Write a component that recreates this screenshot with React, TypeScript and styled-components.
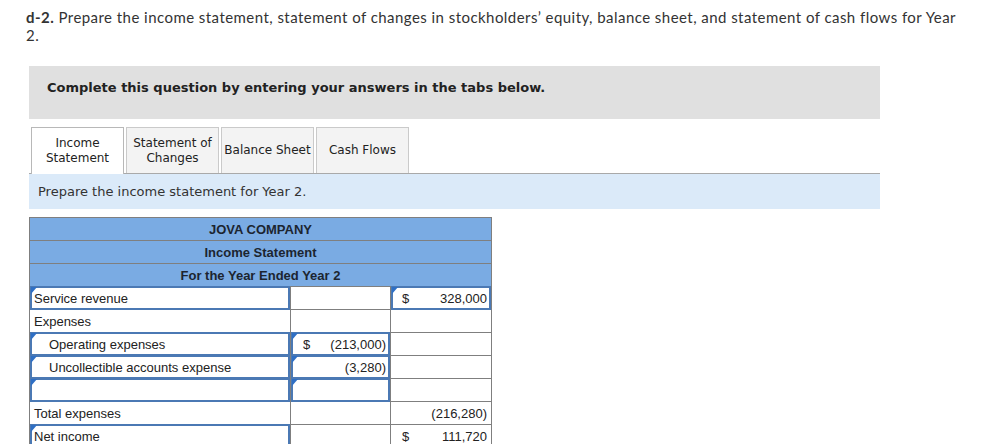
import styled, { createGlobalStyle } from "styled-components";

const GlobalStyle = createGlobalStyle`
  html, body {
    margin: 0;
    padding: 0;
    background: #ffffff;
  }
`;

const Page = styled.div`
  padding: 8px 0 0 26px;
  font-family: "Lato", "Liberation Sans", sans-serif;
  color: #333;
`;

const Heading = styled.p`
  margin: 0;
  width: 940px;
  font-size: 15px;
  letter-spacing: 0.45px;
  line-height: 18px;
  color: #333;
  b {
    font-weight: 700;
  }
`;

const Content = styled.div`
  margin-left: 3px;
  width: 851px;
`;

const Instructions = styled.div`
  margin-top: 22px;
  height: 53px;
  box-sizing: border-box;
  padding: 14px 18px;
  background: #e0e0e0;
  font-family: "DejaVu Sans", Verdana, sans-serif;
  font-size: 13px;
  font-weight: 700;
  line-height: 16px;
  color: #222;
`;

const TabBar = styled.div`
  margin-top: 8px;
  display: flex;
  gap: 2px;
  padding-left: 2px;
  border-bottom: 1px solid #a9a9a9;
`;

const Tab = styled.div<{ $active?: boolean }>`
  width: 93px;
  box-sizing: border-box;
  display: flex;
  align-items: center;
  justify-content: center;
  text-align: center;
  border: 1px solid ${(p) => (p.$active ? "#b8b8b8" : "#cacaca")};
  border-bottom: none;
  background: ${(p) => (p.$active ? "#ffffff" : "#f3f3f3")};
  margin-bottom: ${(p) => (p.$active ? "-1px" : "0")};
  height: ${(p) => (p.$active ? "47px" : "46px")};
  font-family: "DejaVu Sans", Verdana, sans-serif;
  font-size: 12px;
  line-height: 15px;
  color: #222;
`;

const Prompt = styled.div`
  height: 35px;
  box-sizing: border-box;
  padding: 10px 9px;
  background: #dbeaf9;
  font-family: "DejaVu Sans", Verdana, sans-serif;
  font-size: 13px;
  line-height: 16px;
  color: #333;
`;

const Sheet = styled.table`
  margin-top: 8px;
  border-collapse: collapse;
  table-layout: fixed;
  width: 462px;
  font-family: "Liberation Sans", Arial, sans-serif;
  font-size: 13px;
  color: #222;
`;

const TitleCell = styled.td`
  height: 22px;
  padding: 0;
  background: #7aabe3;
  border: 1px solid #7f7f7f;
  text-align: center;
  font-weight: 700;
  color: #1c2530;
`;

const Cell = styled.td<{ $rule?: boolean }>`
  height: 22px;
  padding: 0;
  border: 1px solid #7f7f7f;
  border-top-color: ${(p) => (p.$rule ? "#000" : "#7f7f7f")};
  vertical-align: middle;
`;

const Field = styled.div<{ $input?: boolean }>`
  position: relative;
  box-sizing: border-box;
  display: flex;
  align-items: center;
  border: 2px solid ${(p) => (p.$input ? "#4b79b4" : "transparent")};
  margin: ${(p) => (p.$input ? "-1px 0" : "0")};
  height: ${(p) => (p.$input ? "24px" : "22px")};
`;

const Marker = styled.span`
  position: absolute;
  left: -1px;
  top: -1px;
  width: 0;
  height: 0;
  border-top: 7px solid #2f6fc4;
  border-right: 6px solid transparent;
`;

const Label = styled.span<{ $indent?: boolean }>`
  padding-left: ${(p) => (p.$indent ? "17px" : "2px")};
  white-space: nowrap;
`;

const Amount = styled.div<{ $dollarGap: number }>`
  flex: 1;
  display: flex;
  justify-content: space-between;
  padding: 0 2px 0 ${(p) => p.$dollarGap}px;
  white-space: nowrap;
`;

type Value = { dollar?: boolean; text?: string; input?: boolean };

type Row = {
  label: string;
  indent?: boolean;
  labelInput?: boolean;
  mid?: Value;
  right?: Value;
  midRule?: boolean;
  rightRule?: boolean;
};

const rows: Row[] = [
  { label: "Service revenue", labelInput: true, right: { dollar: true, text: "328,000", input: true } },
  { label: "Expenses" },
  { label: "Operating expenses", indent: true, labelInput: true, mid: { dollar: true, text: "(213,000)", input: true } },
  { label: "Uncollectible accounts expense", indent: true, labelInput: true, mid: { text: "(3,280)", input: true } },
  { label: "", labelInput: true, mid: { text: "", input: true } },
  { label: "Total expenses", midRule: true, right: { text: "(216,280)" } },
  { label: "Net income", labelInput: true, rightRule: true, right: { dollar: true, text: "111,720" } },
];

const ValueCell = ({ value, rule, gap }: { value?: Value; rule?: boolean; gap: number }) => (
  <Cell $rule={rule}>
    <Field $input={value?.input}>
      {value?.input && <Marker />}
      {value && (
        <Amount $dollarGap={gap}>
          <span>{value.dollar ? "$" : ""}</span>
          <span>{value.text}</span>
        </Amount>
      )}
    </Field>
  </Cell>
);

const App = () => {
  return (
    <>
      <GlobalStyle />
      <Page>
        <Heading>
          <b>d-2.</b> Prepare the income statement, statement of changes in stockholders’ equity, balance
          sheet, and statement of cash flows for Year 2.
        </Heading>
        <Content>
          <Instructions>Complete this question by entering your answers in the tabs below.</Instructions>
          <TabBar>
            <Tab $active>
              Income
              <br />
              Statement
            </Tab>
            <Tab>
              Statement of
              <br />
              Changes
            </Tab>
            <Tab>Balance Sheet</Tab>
            <Tab>Cash Flows</Tab>
          </TabBar>
          <Prompt>Prepare the income statement for Year 2.</Prompt>
          <Sheet>
            <colgroup>
              <col style={{ width: 261 }} />
              <col style={{ width: 100 }} />
              <col style={{ width: 101 }} />
            </colgroup>
            <tbody>
              <tr>
                <TitleCell colSpan={3}>JOVA COMPANY</TitleCell>
              </tr>
              <tr>
                <TitleCell colSpan={3}>Income Statement</TitleCell>
              </tr>
              <tr>
                <TitleCell colSpan={3}>For the Year Ended Year 2</TitleCell>
              </tr>
              {rows.map((row, i) => (
                <tr key={i}>
                  <Cell>
                    <Field $input={row.labelInput}>
                      {row.labelInput && <Marker />}
                      <Label $indent={row.indent}>{row.label}</Label>
                    </Field>
                  </Cell>
                  <ValueCell value={row.mid} rule={row.midRule} gap={10} />
                  <ValueCell value={row.right} rule={row.rightRule} gap={9} />
                </tr>
              ))}
            </tbody>
          </Sheet>
        </Content>
      </Page>
    </>
  );
};

export default App;
